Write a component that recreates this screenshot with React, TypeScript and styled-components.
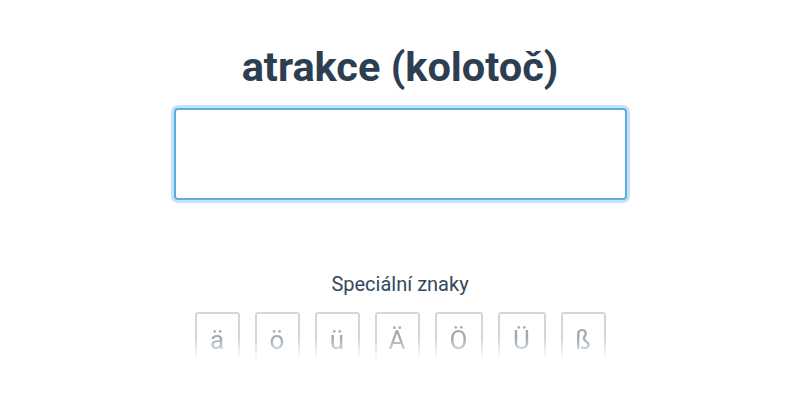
import styled, { createGlobalStyle } from "styled-components";

const GlobalStyle = createGlobalStyle`
  body {
    margin: 0;
    background: #fff;
    font-family: Roboto, "Liberation Sans", sans-serif;
  }
`;

const Page = styled.div`
  width: 800px;
  height: 400px;
  display: flex;
  flex-direction: column;
  align-items: center;
  overflow: hidden;
`;

const Title = styled.h1`
  margin: 43px 0 0;
  font-size: 41.5px;
  line-height: 48px;
  font-weight: 700;
  color: #2c3e50;
`;

const AnswerInput = styled.input`
  box-sizing: border-box;
  margin-top: 17px;
  width: 453px;
  height: 92px;
  border: 2px solid #5dade2;
  border-radius: 4px;
  box-shadow: 0 0 0 3px rgba(93, 173, 226, 0.35);
  outline: none;
  font: inherit;
  font-size: 24px;
  text-align: center;
  color: #2c3e50;
`;

const Label = styled.div`
  margin-top: 72px;
  font-size: 20px;
  line-height: 24px;
  color: #34495e;
`;

const KeyRow = styled.div`
  display: flex;
  gap: 15px;
  margin-top: 16px;
  height: 48px;
  overflow: hidden;
  -webkit-mask-image: linear-gradient(to bottom, #000 55%, transparent 100%);
  mask-image: linear-gradient(to bottom, #000 55%, transparent 100%);
`;

const Key = styled.button<{ $wide?: boolean }>`
  box-sizing: border-box;
  min-width: ${(p) => (p.$wide ? "48px" : "45px")};
  height: 60px;
  padding: 11px 10px 0;
  display: flex;
  justify-content: center;
  align-items: flex-start;
  background: #fff;
  border: 2px solid #d3d7dc;
  border-radius: 3px;
  font-family: Roboto, "Liberation Sans", sans-serif;
  font-size: 26px;
  line-height: 30px;
  color: #a0aab2;
`;

const keys = ["ä", "ö", "ü", "Ä", "Ö", "Ü", "ß"];

export default function App() {
  return (
    <Page>
      <GlobalStyle />
      <Title>atrakce (kolotoč)</Title>
      <AnswerInput autoFocus />
      <Label>Speciální znaky</Label>
      <KeyRow>
        {keys.map((k) => (
          <Key key={k} $wide={k === "Ö" || k === "Ü"}>
            {k}
          </Key>
        ))}
      </KeyRow>
    </Page>
  );
}
